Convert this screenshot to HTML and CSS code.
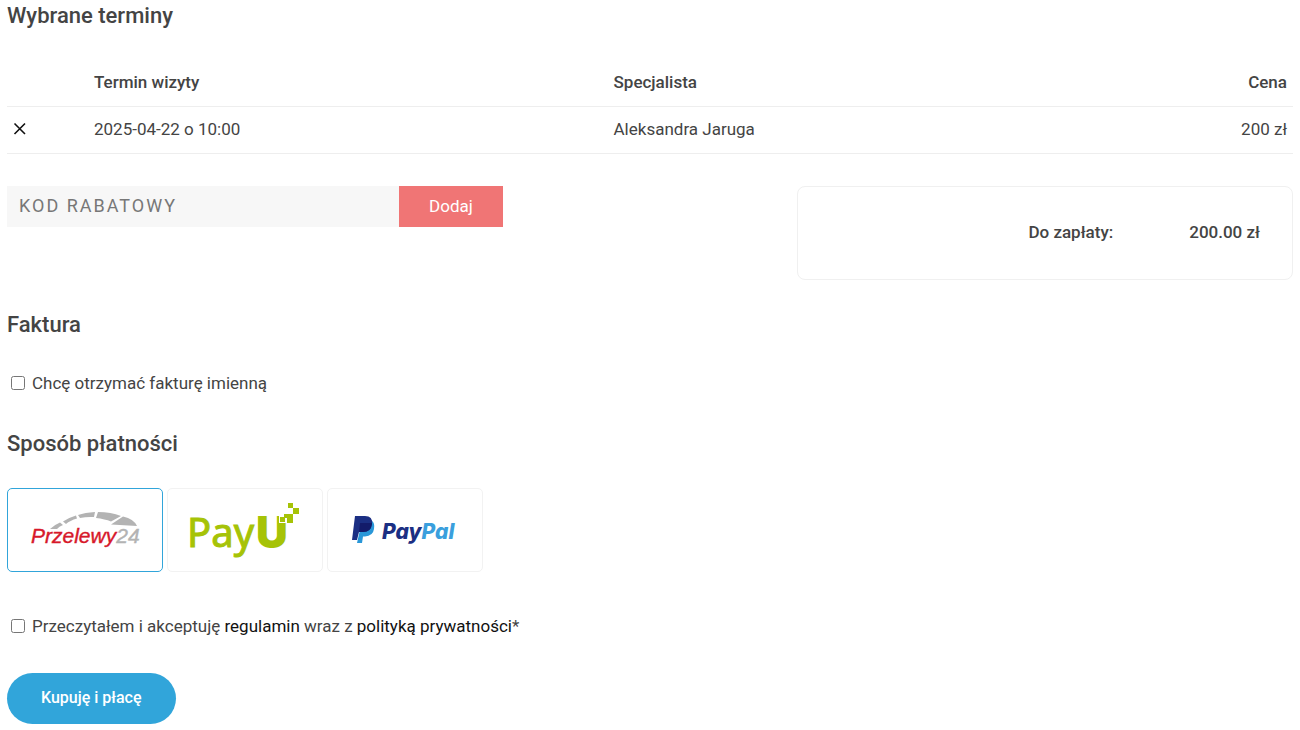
FILE: index.html
```
<!DOCTYPE html>
<html lang="pl">
<head>
  <meta charset="UTF-8" />
  <meta name="viewport" content="width=device-width, initial-scale=1.0"/>
  <title>Podsumowanie zamówienia</title>
  <link rel="stylesheet" href="styles.css">
</head>
<body>
  <form class="checkout">
    <h2 class="heading">Wybrane terminy</h2>

    <table class="visits">
      <thead>
        <tr>
          <th class="col-remove"></th>
          <th class="col-date">Termin wizyty</th>
          <th>Specjalista</th>
          <th class="col-price">Cena</th>
        </tr>
      </thead>
      <tbody>
        <tr>
          <td>
            <button type="button" class="remove" aria-label="Usuń">
              <svg width="14" height="14" viewBox="0 0 14 14"><path d="M1.500 1.500l10.500 10.500M12 1.500l-10.500 10.500" fill="none" stroke="#111" stroke-width="1.6"/></svg>
            </button>
          </td>
          <td>2025-04-22 o 10:00</td>
          <td>Aleksandra Jaruga</td>
          <td class="col-price">200 zł</td>
        </tr>
      </tbody>
    </table>

    <div class="summary">
      <div class="coupon">
        <input type="text" class="coupon-input" placeholder="KOD RABATOWY" aria-label="Kod rabatowy">
        <button type="button" class="coupon-btn">Dodaj</button>
      </div>
      <div class="total">
        <span>Do zapłaty:</span>
        <span>200.00 zł</span>
      </div>
    </div>

    <h2 class="heading">Faktura</h2>
    <div class="check invoice">
      <input type="checkbox" id="invoice">
      <label for="invoice">Chcę otrzymać fakturę imienną</label>
    </div>

    <h2 class="heading">Sposób płatności</h2>
    <div class="payments">
      <label class="payment">
        <input type="radio" name="payment" value="p24" aria-label="Przelewy24" checked>
        <svg class="logo" viewBox="0 0 120 60">
          <g fill="#b3b3b3">
            <path d="M25 29Q29 25 35 22.500L38 25Q34 26.500 32 29Z"/>
            <path d="M38 21.500Q44 17.500 51 15.500L52 18.500Q45 20.500 41 24Z"/>
            <path d="M53 15Q60 12.500 70 12L69 17Q62 16.500 55 18Z"/>
            <path d="M73 12Q86 12 96 16L86 21.500Q80 19 71 18Z"/>
            <path d="M98 16.500Q109 19 112 26L86 24.500Z"/>
          </g>
          <text class="p24-name" x="6" y="43">Przelewy<tspan class="p24-num">24</tspan></text>
        </svg>
      </label>
      <label class="payment">
        <input type="radio" name="payment" value="payu" aria-label="PayU">
        <svg class="logo" viewBox="0 0 120 60">
          <text class="payu-name" x="2" y="47">Pay</text>
          <text class="payu-u" x="71" y="48">U</text>
          <path fill="#fff" d="M94 12h11v11h-11z"/>
          <path fill="#a6c307" d="M103 3h5v5h-5zM108 8h6v6h-6zM99 14h9v9h-6v-5h-3zM95 17h5v5h-5z"/>
        </svg>
      </label>
      <label class="payment">
        <input type="radio" name="payment" value="paypal" aria-label="PayPal">
        <svg class="logo" viewBox="0 0 120 60">
          <path fill="#2997d8" d="M17 21h10q3 2 2 8-1 7-9 7.500h-2l-1 6.500h-5z"/>
          <path fill="#1b2f83" d="M10 16h10q8 0 7 8-1 8-9 8h-4l-2 8H7z"/>
          <path fill="#131b6a" d="M15 23h12v1q-1 8-9 8h-4z"/>
          <text class="paypal-name" x="37" y="39">Pay<tspan fill="#3a9fdd">Pal</tspan></text>
        </svg>
      </label>
    </div>

    <div class="check terms">
      <input type="checkbox" id="terms">
      <label for="terms">Przeczytałem i akceptuję <a href="#regulamin">regulamin</a> wraz z <a href="#prywatnosc">polityką prywatności</a>*</label>
    </div>

    <button type="submit" class="buy">Kupuję i płacę</button>
  </form>
</body>
</html>
```

FILE: styles.css
```
* {
  box-sizing: border-box;
}
body {
  margin: 0;
  background: #fff;
  color: #444;
  font-family: Roboto, "Liberation Sans", sans-serif;
  font-size: 17px;
  line-height: 24px;
}
button,
input {
  font: inherit;
}
.checkout {
  padding: 0 7px 6px;
}
.heading {
  margin: 0;
  font-size: 22px;
  font-weight: 500;
  line-height: 32px;
}

/* visits table */
.visits {
  width: 100%;
  margin: 27px 0 32px;
  border-collapse: collapse;
  table-layout: fixed;
}
.visits th,
.visits td {
  height: 47px;
  padding: 0 6px;
  border-bottom: 1px solid #eee;
  text-align: left;
}
.visits td {
  padding-bottom: 2px;
}
.visits th {
  font-weight: 500;
}
.visits .col-remove {
  width: 81px;
}
.visits .col-date {
  width: 40.4%;
}
.visits .col-price {
  text-align: right;
}
.remove {
  display: block;
  padding: 0;
  border: 0;
  background: none;
  cursor: pointer;
}
.remove svg {
  display: block;
}

/* coupon and total */
.summary {
  display: flex;
  justify-content: space-between;
  align-items: flex-start;
  margin-bottom: 29px;
}
.coupon {
  display: flex;
  width: 496px;
}
.coupon-input {
  flex: 1;
  min-width: 0;
  height: 41px;
  padding: 0 12px 2px;
  border: 0;
  border-radius: 0;
  background: #f7f7f7;
  font-size: 18px;
  letter-spacing: 2px;
}
.coupon-input::placeholder {
  color: #777;
}
.coupon-btn {
  width: 104px;
  border: 0;
  background: #f07575;
  color: #fff;
}
.total {
  display: flex;
  justify-content: flex-end;
  gap: 76px;
  width: 496px;
  padding: 33px 32px 35px;
  border: 1px solid #f0f0f0;
  border-radius: 8px;
  font-weight: 500;
}

.check {
  display: flex;
  align-items: center;
  gap: 7px;
  padding-left: 4px;
}
.check input {
  width: 14px;
  height: 14px;
  margin: 0;
}
.check a {
  color: #111;
  text-decoration: none;
}
.invoice {
  margin: 30px 0 33px;
}
.terms {
  margin: 42px 0 35px;
}

/* payment methods */
.payments {
  display: flex;
  gap: 4px;
  margin-top: 28px;
}
.payment {
  display: flex;
  justify-content: center;
  align-items: center;
  width: 156px;
  height: 84px;
  border: 1px solid #f2f2f2;
  border-radius: 5px;
  cursor: pointer;
}
.payment:has(input:checked) {
  border-color: #31a5da;
}
.payment input {
  appearance: none;
  width: 0;
  height: 0;
  margin: 0;
}
.logo {
  width: 120px;
  height: 60px;
}
.p24-name {
  fill: #d7182a;
  stroke: #d7182a;
  stroke-width: 0.4;
  font: italic 400 21px "Liberation Sans", sans-serif;
}
.p24-num {
  fill: #b3b3b3;
  stroke: #b3b3b3;
}
.payu-name {
  fill: #a6c307;
  stroke: #a6c307;
  font: 400 40px "Noto Sans", sans-serif;
}
.payu-u {
  fill: #a6c307;
  font: 900 44px Inter, sans-serif;
}
.paypal-name {
  fill: #1b2f83;
  font: italic 800 21px Inter, sans-serif;
}

.buy {
  height: 51px;
  padding: 0 34px;
  border: 0;
  border-radius: 26px;
  background: #31a5da;
  color: #fff;
  font-size: 16px;
  font-weight: 500;
}
```
